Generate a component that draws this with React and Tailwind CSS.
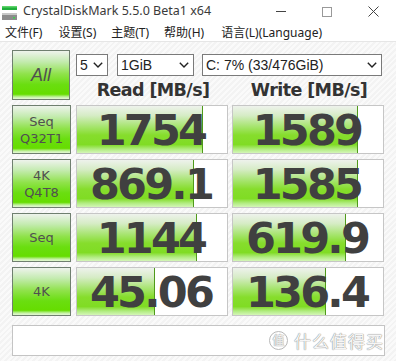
import React from 'react';

const rows = [
  { label: ['Seq', 'Q32T1'], read: '1754', readBar: 126, write: '1589', writeBar: 125 },
  { label: ['4K', 'Q4T8'], read: '869.1', readBar: 117, write: '1585', writeBar: 125 },
  { label: ['Seq'], read: '1144', readBar: 120, write: '619.9', writeBar: 113 },
  { label: ['4K'], read: '45.06', readBar: 78, write: '136.4', writeBar: 93 },
];

const btnBg =
  'bg-[linear-gradient(to_bottom,#eef3ec_0%,#c4ebb0_22%,#8fe24a_48%,#6ade10_70%,#66dd00_90%,#c6f2a6_96%,#e4f8d4_100%)]';
const barBg =
  'bg-[linear-gradient(to_bottom,#eef2ec_0%,#d6ecc6_20%,#a4e46a_45%,#86dd2c_62%,#80dc24_82%,#b2ec82_92%,#d4f6b8_100%)]';

const Chevron = () => (
  <svg width="10" height="6" viewBox="0 0 10 6" className="shrink-0">
    <polyline points="0.8,0.8 5,5 9.2,0.8" fill="none" stroke="#222" strokeWidth="1.4" />
  </svg>
);

const Select = ({ value, width }) => (
  <div
    className="h-[22px] bg-white border border-[#7a7a7a] flex items-center justify-between pl-[3px] pr-[4px] text-[14px] text-[#222] font-['Liberation_Sans',sans-serif]"
    style={{ width }}
  >
    <span>{value}</span>
    <Chevron />
  </div>
);

const Score = ({ value, bar }) => (
  <div className="relative w-[152px] h-full bg-white border border-[#c6c6c6] flex items-center justify-center overflow-hidden">
    <div
      className={`absolute left-0 top-0 bottom-0 ${barBg} border-r border-[#4f9a1a]`}
      style={{ width: bar }}
    />
    <span className="relative text-[43px] leading-none font-bold tracking-[-2.8px] text-[#404040] font-['DejaVu_Sans',sans-serif] pr-[2px] pt-[1px]">
      {value}
    </span>
  </div>
);

const App = () => {
  return (
    <div className="w-[396px] h-[361px] overflow-hidden relative bg-white">
      {/* title bar */}
      <div className="h-[23px] flex items-center bg-white">
        <svg width="18" height="18" viewBox="0 0 18 18" className="ml-[1px] mt-[3px]">
          <rect x="1" y="2" width="15" height="4" fill="#1fae3a" />
          <rect x="1" y="2" width="15" height="1.5" fill="#5fd46a" />
          <rect x="1" y="9" width="15" height="7" fill="#8c8c8c" />
          <rect x="1" y="9" width="15" height="2" fill="#c8c8c8" />
          <rect x="12" y="13" width="2" height="1.5" fill="#3ad04a" />
        </svg>
        <span className="ml-[4px] text-[12.5px] text-[#3a3a3a] font-['Noto_Sans',sans-serif]">
          CrystalDiskMark 5.5.0 Beta1 x64
        </span>
        <div className="ml-auto flex items-center">
          <div className="w-[46px] flex justify-center">
            <div className="w-[10px] h-px bg-[#444]" />
          </div>
          <div className="w-[46px] flex justify-center">
            <div className="w-[10px] h-[10px] border border-[#999]" />
          </div>
          <div className="w-[46px] flex justify-center">
            <svg width="11" height="11" viewBox="0 0 11 11">
              <path d="M0.5 0.5 L10.5 10.5 M10.5 0.5 L0.5 10.5" stroke="#444" strokeWidth="1" />
            </svg>
          </div>
        </div>
      </div>

      {/* menu bar */}
      <div className="h-[19px] flex items-center pt-[2px] bg-white border-b border-[#e6e6e6] text-[12px] text-[#222] font-['Noto_Sans','Noto_Sans_CJK_SC',sans-serif]">
        <span className="ml-[5px]">文件(F)</span>
        <span className="ml-[16px]">设置(S)</span>
        <span className="ml-[15px]">主题(T)</span>
        <span className="ml-[15px]">帮助(H)</span>
        <span className="ml-[17px]">语言(L)(Language)</span>
      </div>

      {/* body */}
      <div className="h-[319px] bg-[repeating-linear-gradient(135deg,#f3f3f3_0px,#f3f3f3_2px,#fafafa_2px,#fafafa_4px)] px-[12px] pt-[8px] flex flex-col">
        <div className="flex h-[50px]">
          <div
            className={`w-[60px] h-full border border-[#6f7f6f] ${btnBg} flex items-center justify-center text-[18px] italic text-[#505050] font-['Liberation_Sans',sans-serif]`}
          >
            All
          </div>
          <div className="ml-[6px] flex flex-col">
            <div className="mt-[4px] flex">
              <Select value="5" width={32} />
              <div className="ml-[9px]">
                <Select value="1GiB" width={77} />
              </div>
              <div className="ml-[8px]">
                <Select value="C: 7% (33/476GiB)" width={180} />
              </div>
            </div>
            <div className="flex-1 flex items-end text-[17.5px] leading-[20px] font-bold tracking-[-0.6px] text-[#333] font-['DejaVu_Sans',sans-serif]">
              <div className="w-[152px] text-center pl-[2px]">Read [MB/s]</div>
              <div className="w-[152px] ml-[4px] text-center pl-[2px]">Write [MB/s]</div>
            </div>
          </div>
        </div>

        {rows.map((r, i) => (
          <div key={i} className="flex h-[49px] mt-[5px]">
            <div
              className={`w-[60px] h-full border border-[#6f7f6f] ${btnBg} flex flex-col items-center justify-center text-[13px] leading-[17px] text-[#505050] font-['DejaVu_Sans',sans-serif]`}
            >
              {r.label.map((t) => (
                <span key={t}>{t}</span>
              ))}
            </div>
            <div className="ml-[5px] h-full">
              <Score value={r.read} bar={r.readBar} />
            </div>
            <div className="ml-[4px] h-full">
              <Score value={r.write} bar={r.writeBar} />
            </div>
          </div>
        ))}

        <div className="mt-[9px] h-[31px] w-[373px] bg-white border border-[#c4c4c4]" />
      </div>

      {/* watermark */}
      <div className="absolute right-[12px] bottom-[8px] flex items-center gap-[6px] text-[#f6f6f6] [text-shadow:0_0_1px_#8a8a8a,0_0_1px_#8a8a8a] font-['Noto_Sans_CJK_SC',sans-serif]">
        <div className="w-[19px] h-[19px] rounded-full border border-[#b8b8b8] flex items-center justify-center text-[12px]">
          值
        </div>
        <span className="text-[17px] tracking-[1px]">什么值得买</span>
      </div>
    </div>
  );
};

export default App;
